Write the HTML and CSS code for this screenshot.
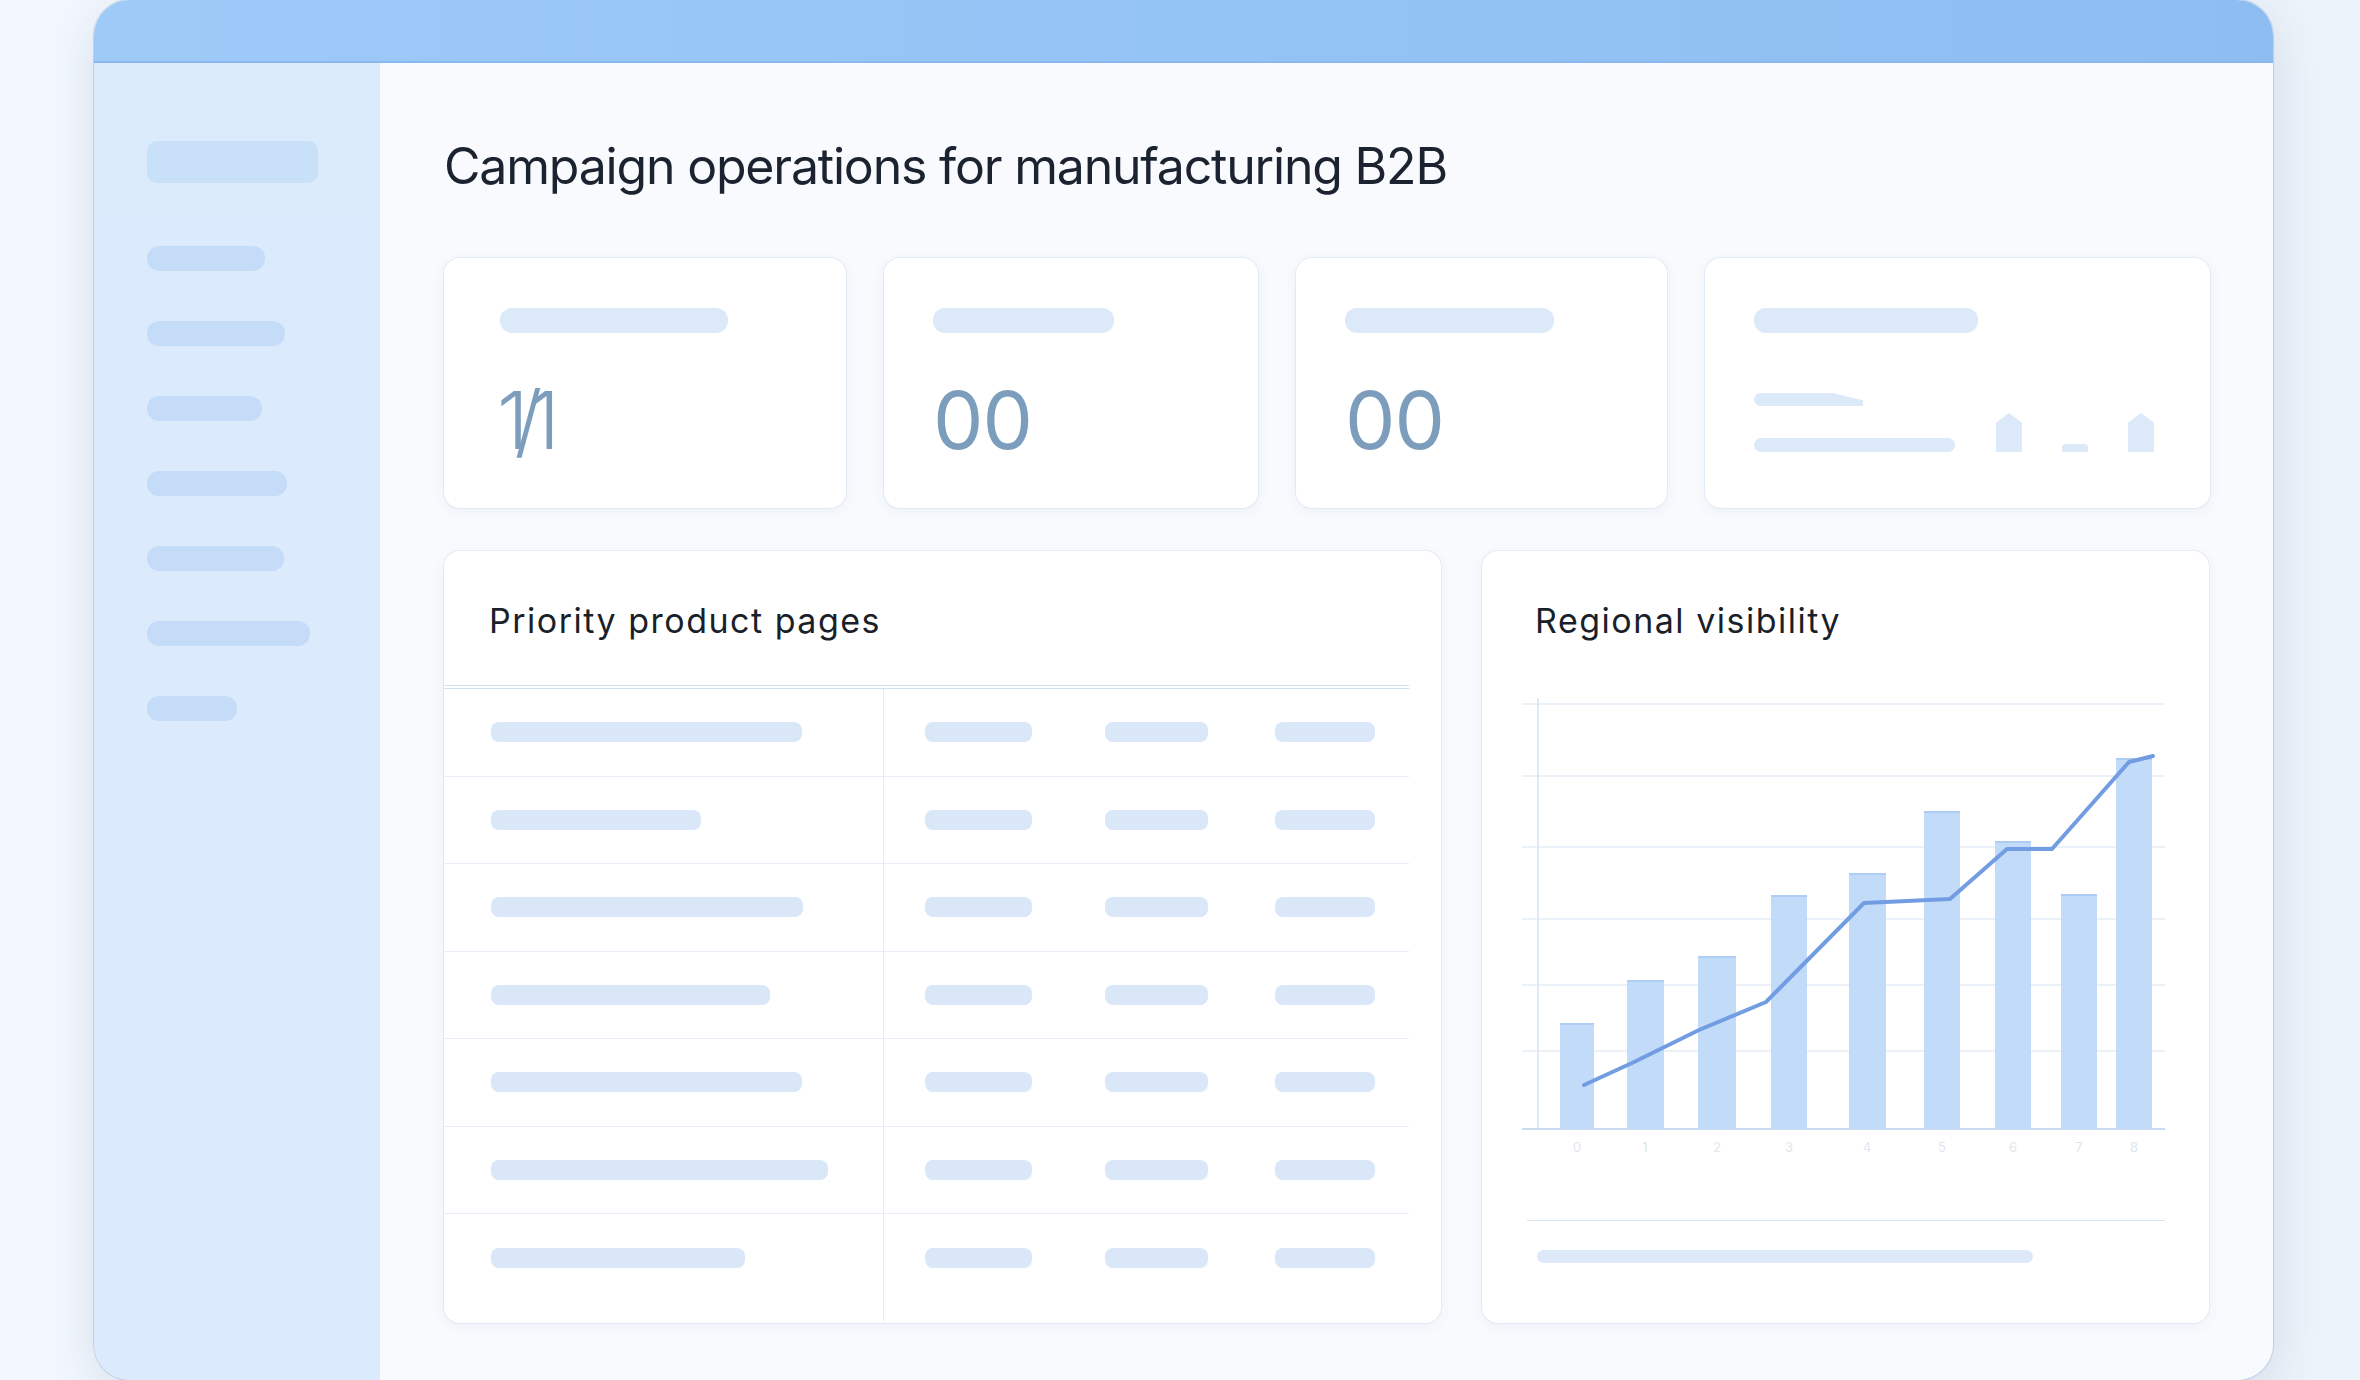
FILE: index.html
```html
<!DOCTYPE html>
<html lang="en">
<head>
<meta charset="utf-8">
<title>Campaign operations for manufacturing B2B</title>
<link rel="stylesheet" href="styles.css">
</head>
<body>
<div class="window">
  <div class="topbar"></div>
  <div class="shell">
    <aside class="sidebar">
      <div class="side-logo"></div>
      <div class="side-item w118"></div>
      <div class="side-item w138"></div>
      <div class="side-item w115"></div>
      <div class="side-item w140"></div>
      <div class="side-item w137"></div>
      <div class="side-item w163"></div>
      <div class="side-item w90"></div>
    </aside>
    <main class="main">
      <h1 class="title">Campaign operations for manufacturing B2B</h1>
      <section class="stats">
        <div class="card">
          <div class="skel label first w228"></div>
          <div class="num num-frac">1/1</div>
        </div>
        <div class="card">
          <div class="skel label w181"></div>
          <div class="num">00</div>
        </div>
        <div class="card">
          <div class="skel label w209"></div>
          <div class="num">00</div>
        </div>
        <div class="card">
          <div class="skel label w224"></div>
          <div class="card-foot">
            <div class="foot-lines">
              <div class="skel taper"></div>
              <div class="skel line"></div>
            </div>
            <div class="mini">
              <div class="mini-bar tall"></div>
              <div class="mini-bar short"></div>
              <div class="mini-bar tall"></div>
            </div>
          </div>
        </div>
      </section>
      <section class="panels">
        <div class="panel table-panel">
          <div class="panel-head"><h2 class="panel-title">Priority product pages</h2></div>
          <div class="table">
            <div class="row"><div class="cell first"><div class="skel bar" style="width:311px"></div></div><div class="cell divided"><div class="skel bar w107"></div></div><div class="cell"><div class="skel bar w103"></div></div><div class="cell"><div class="skel bar w100"></div></div></div>
            <div class="row"><div class="cell first"><div class="skel bar" style="width:210px"></div></div><div class="cell divided"><div class="skel bar w107"></div></div><div class="cell"><div class="skel bar w103"></div></div><div class="cell"><div class="skel bar w100"></div></div></div>
            <div class="row"><div class="cell first"><div class="skel bar" style="width:312px"></div></div><div class="cell divided"><div class="skel bar w107"></div></div><div class="cell"><div class="skel bar w103"></div></div><div class="cell"><div class="skel bar w100"></div></div></div>
            <div class="row"><div class="cell first"><div class="skel bar" style="width:279px"></div></div><div class="cell divided"><div class="skel bar w107"></div></div><div class="cell"><div class="skel bar w103"></div></div><div class="cell"><div class="skel bar w100"></div></div></div>
            <div class="row"><div class="cell first"><div class="skel bar" style="width:311px"></div></div><div class="cell divided"><div class="skel bar w107"></div></div><div class="cell"><div class="skel bar w103"></div></div><div class="cell"><div class="skel bar w100"></div></div></div>
            <div class="row"><div class="cell first"><div class="skel bar" style="width:337px"></div></div><div class="cell divided"><div class="skel bar w107"></div></div><div class="cell"><div class="skel bar w103"></div></div><div class="cell"><div class="skel bar w100"></div></div></div>
            <div class="row last"><div class="cell first"><div class="skel bar" style="width:254px"></div></div><div class="cell divided"><div class="skel bar w107"></div></div><div class="cell"><div class="skel bar w103"></div></div><div class="cell"><div class="skel bar w100"></div></div></div>
          </div>
        </div>
        <div class="panel chart-panel">
          <h2 class="panel-title chart-title">Regional visibility</h2>
          <svg class="chart" width="727" height="470" viewBox="0 0 727 470" xmlns="http://www.w3.org/2000/svg">
            <g stroke="#e3ecf6" stroke-width="1.5">
              <line x1="40" y1="14" x2="683" y2="14"/>
              <line x1="40" y1="86" x2="683" y2="86"/>
              <line x1="40" y1="157" x2="683" y2="157"/>
              <line x1="40" y1="229" x2="683" y2="229"/>
              <line x1="40" y1="295" x2="683" y2="295"/>
              <line x1="40" y1="361" x2="683" y2="361"/>
            </g>
            <line x1="56" y1="8" x2="56" y2="439" stroke="#d6e3f2" stroke-width="1.5"/>
            <line x1="40" y1="439" x2="683" y2="439" stroke="#c9dbf0" stroke-width="2"/>
            <g fill="#c2dbf9">
              <rect x="78" y="334" width="34" height="105"/>
              <rect x="145" y="291" width="37" height="148"/>
              <rect x="216" y="267" width="38" height="172"/>
              <rect x="289" y="206" width="36" height="233"/>
              <rect x="367" y="184" width="37" height="255"/>
              <rect x="442" y="122" width="36" height="317"/>
              <rect x="513" y="152" width="36" height="287"/>
              <rect x="579" y="205" width="36" height="234"/>
              <rect x="634" y="69" width="36" height="370"/>
            </g>
            <g fill="#aecdf4">
              <rect x="78" y="333" width="34" height="2"/>
              <rect x="145" y="290" width="37" height="2"/>
              <rect x="216" y="266" width="38" height="2"/>
              <rect x="289" y="205" width="36" height="2"/>
              <rect x="367" y="183" width="37" height="2"/>
              <rect x="442" y="121" width="36" height="2"/>
              <rect x="513" y="151" width="36" height="2"/>
              <rect x="579" y="204" width="36" height="2"/>
              <rect x="634" y="68" width="36" height="2"/>
            </g>
            <polyline points="102,395 150,373 217,340 284,312 382,213 468,209 525,159 570,159 647,72 671,66" fill="none" stroke="#739de2" stroke-width="4" stroke-linejoin="round" stroke-linecap="round"/>
            <g fill="#dfe6ee" font-family="Inter, sans-serif" font-size="13" text-anchor="middle">
              <text x="95" y="462">0</text>
              <text x="163" y="462">1</text>
              <text x="235" y="462">2</text>
              <text x="307" y="462">3</text>
              <text x="385" y="462">4</text>
              <text x="460" y="462">5</text>
              <text x="531" y="462">6</text>
              <text x="597" y="462">7</text>
              <text x="652" y="462">8</text>
            </g>
          </svg>
          <div class="chart-foot">
            <div class="skel foot-bar"></div>
          </div>
        </div>
      </section>
    </main>
  </div>
</div>
</body>
</html>
```
FILE: styles.css
```css
* { box-sizing: border-box; }

html, body {
  margin: 0;
  padding: 0;
}

body {
  width: 2360px;
  height: 1380px;
  overflow: hidden;
  background: linear-gradient(90deg, #f3f8fe 0%, #eef4fb 50%, #edf3fa 100%);
  font-family: Inter, "Noto Sans", sans-serif;
  padding: 0 87px 0 94px;
}

.window {
  width: 2179px;
  height: 1380px;
  border-radius: 36px;
  overflow: hidden;
  background: #f8fafd;
  box-shadow: 0 12px 50px rgba(40, 70, 110, 0.14), 0 0 0 1px rgba(170, 198, 230, 0.6);
  display: flex;
  flex-direction: column;
}

.topbar {
  height: 63px;
  flex: none;
  background: linear-gradient(90deg, #9ecaf8 0%, #94c3f5 50%, #8ebdf2 100%);
  border-bottom: 2px solid #88b8ee;
}

.shell {
  flex: 1;
  display: flex;
  min-height: 0;
}

.sidebar {
  width: 286px;
  flex: none;
  background: linear-gradient(180deg, #dcebfc 0%, #dbeafc 100%);
  padding: 78px 0 0 53px;
  display: flex;
  flex-direction: column;
  align-items: flex-start;
}

.side-logo {
  width: 171px;
  height: 42px;
  border-radius: 10px;
  background: #c9e0f9;
  margin-bottom: 63px;
}

.side-item {
  height: 25px;
  border-radius: 12px;
  background: #c4dcf8;
  margin-bottom: 50px;
}

.w118 { width: 118px; }
.w138 { width: 138px; }
.w115 { width: 115px; }
.w140 { width: 140px; }
.w137 { width: 137px; }
.w163 { width: 163px; }
.w90 { width: 90px; }

.main {
  flex: 1;
  min-width: 0;
  padding: 78px 64px 0 64px;
  background: #f8fafd;
}

.title {
  margin: 0;
  font-size: 50px;
  line-height: 1;
  font-weight: 400;
  letter-spacing: -1.2px;
  color: #1c2330;
  height: 50px;
}

.stats {
  margin-top: 67px;
  display: grid;
  grid-template-columns: 402px 374px 371px 505px;
  column-gap: 38px;
}

.card {
  height: 250px;
  background: #ffffff;
  border-radius: 16px;
  box-shadow: 0 3px 14px rgba(40, 80, 140, 0.06), 0 0 0 1px rgba(225, 233, 243, 0.7);
  padding: 50px 49px 0 49px;
}

.skel {
  background: #dce9f8;
  border-radius: 12px;
}

.label {
  height: 25px;
}
.label.first { margin-left: 7px; }
.w228 { width: 228px; }
.w181 { width: 181px; }
.w209 { width: 209px; }
.w224 { width: 224px; }

.num {
  margin-top: 47px;
  font-size: 80px;
  line-height: 1;
  font-weight: 400;
  color: #7d9dbd;
  letter-spacing: -1px;
}

.num-frac {
  margin-left: 4px;
  letter-spacing: -14px;
  font-weight: 300;
}

.card-foot {
  margin-top: 60px;
  display: flex;
  align-items: flex-end;
  gap: 41px;
}

.foot-lines {
  display: flex;
  flex-direction: column;
  gap: 32px;
}

.taper {
  width: 109px;
  height: 13px;
  border-radius: 7px 0 0 7px;
  clip-path: polygon(0 0, 72% 0, 100% 55%, 100% 100%, 0 100%);
}

.line {
  width: 201px;
  height: 14px;
  border-radius: 7px;
}

.mini {
  display: flex;
  align-items: flex-end;
  gap: 40px;
  height: 39px;
}

.mini-bar {
  width: 26px;
  background: #dce9f8;
}
.mini-bar.tall {
  height: 39px;
  clip-path: polygon(0 25%, 50% 0, 100% 25%, 100% 100%, 0 100%);
}
.mini-bar.short {
  height: 8px;
  border-radius: 4px 4px 0 0;
}

.panels {
  margin-top: 43px;
  display: grid;
  grid-template-columns: 997px 1fr;
  column-gap: 41px;
}

.panel {
  height: 772px;
  background: #ffffff;
  border-radius: 16px;
  box-shadow: 0 3px 14px rgba(40, 80, 140, 0.06), 0 0 0 1px rgba(225, 233, 243, 0.7);
  overflow: hidden;
}

.table-panel {
  display: flex;
  flex-direction: column;
}

.panel-head {
  padding: 53px 0 47px 45px;
  margin-right: 32px;
  border-bottom: 4px double #d0e0f2;
}

.panel-title {
  margin: 0;
  font-size: 34px;
  line-height: 1;
  height: 34px;
  font-weight: 400;
  letter-spacing: 1.5px;
  color: #1a1f29;
}

.table {
  flex: 1;
  display: flex;
  flex-direction: column;
}

.row {
  height: 87.5px;
  flex: none;
  display: grid;
  grid-template-columns: 439px 222px 170px 1fr;
  margin-right: 32px;
  border-bottom: 1.5px solid #e6edf6;
}
.row.last {
  flex: 1;
  border-bottom: none;
}

.cell {
  display: flex;
  align-items: center;
}
.row.last .cell {
  align-items: flex-start;
  padding-top: 34px;
}
.cell.first { padding-left: 47px; }
.cell.divided {
  border-left: 1.5px solid #e6edf6;
  padding-left: 41px;
}

.bar {
  height: 20px;
  border-radius: 8px;
  background: #d9e7f8;
}
.w107 { width: 107px; }
.w103 { width: 103px; }
.w100 { width: 100px; }

.chart-title {
  padding-left: 53px;
  margin-top: 53px;
}

.chart {
  display: block;
  margin-top: 52px;
}

.chart-foot {
  margin: 60px 44px 0 45px;
  border-top: 1.5px solid #d5e3f3;
  padding: 29px 0 0 10px;
}

.foot-bar {
  width: 496px;
  height: 13px;
  border-radius: 7px;
  background: #dde9f8;
}
```
